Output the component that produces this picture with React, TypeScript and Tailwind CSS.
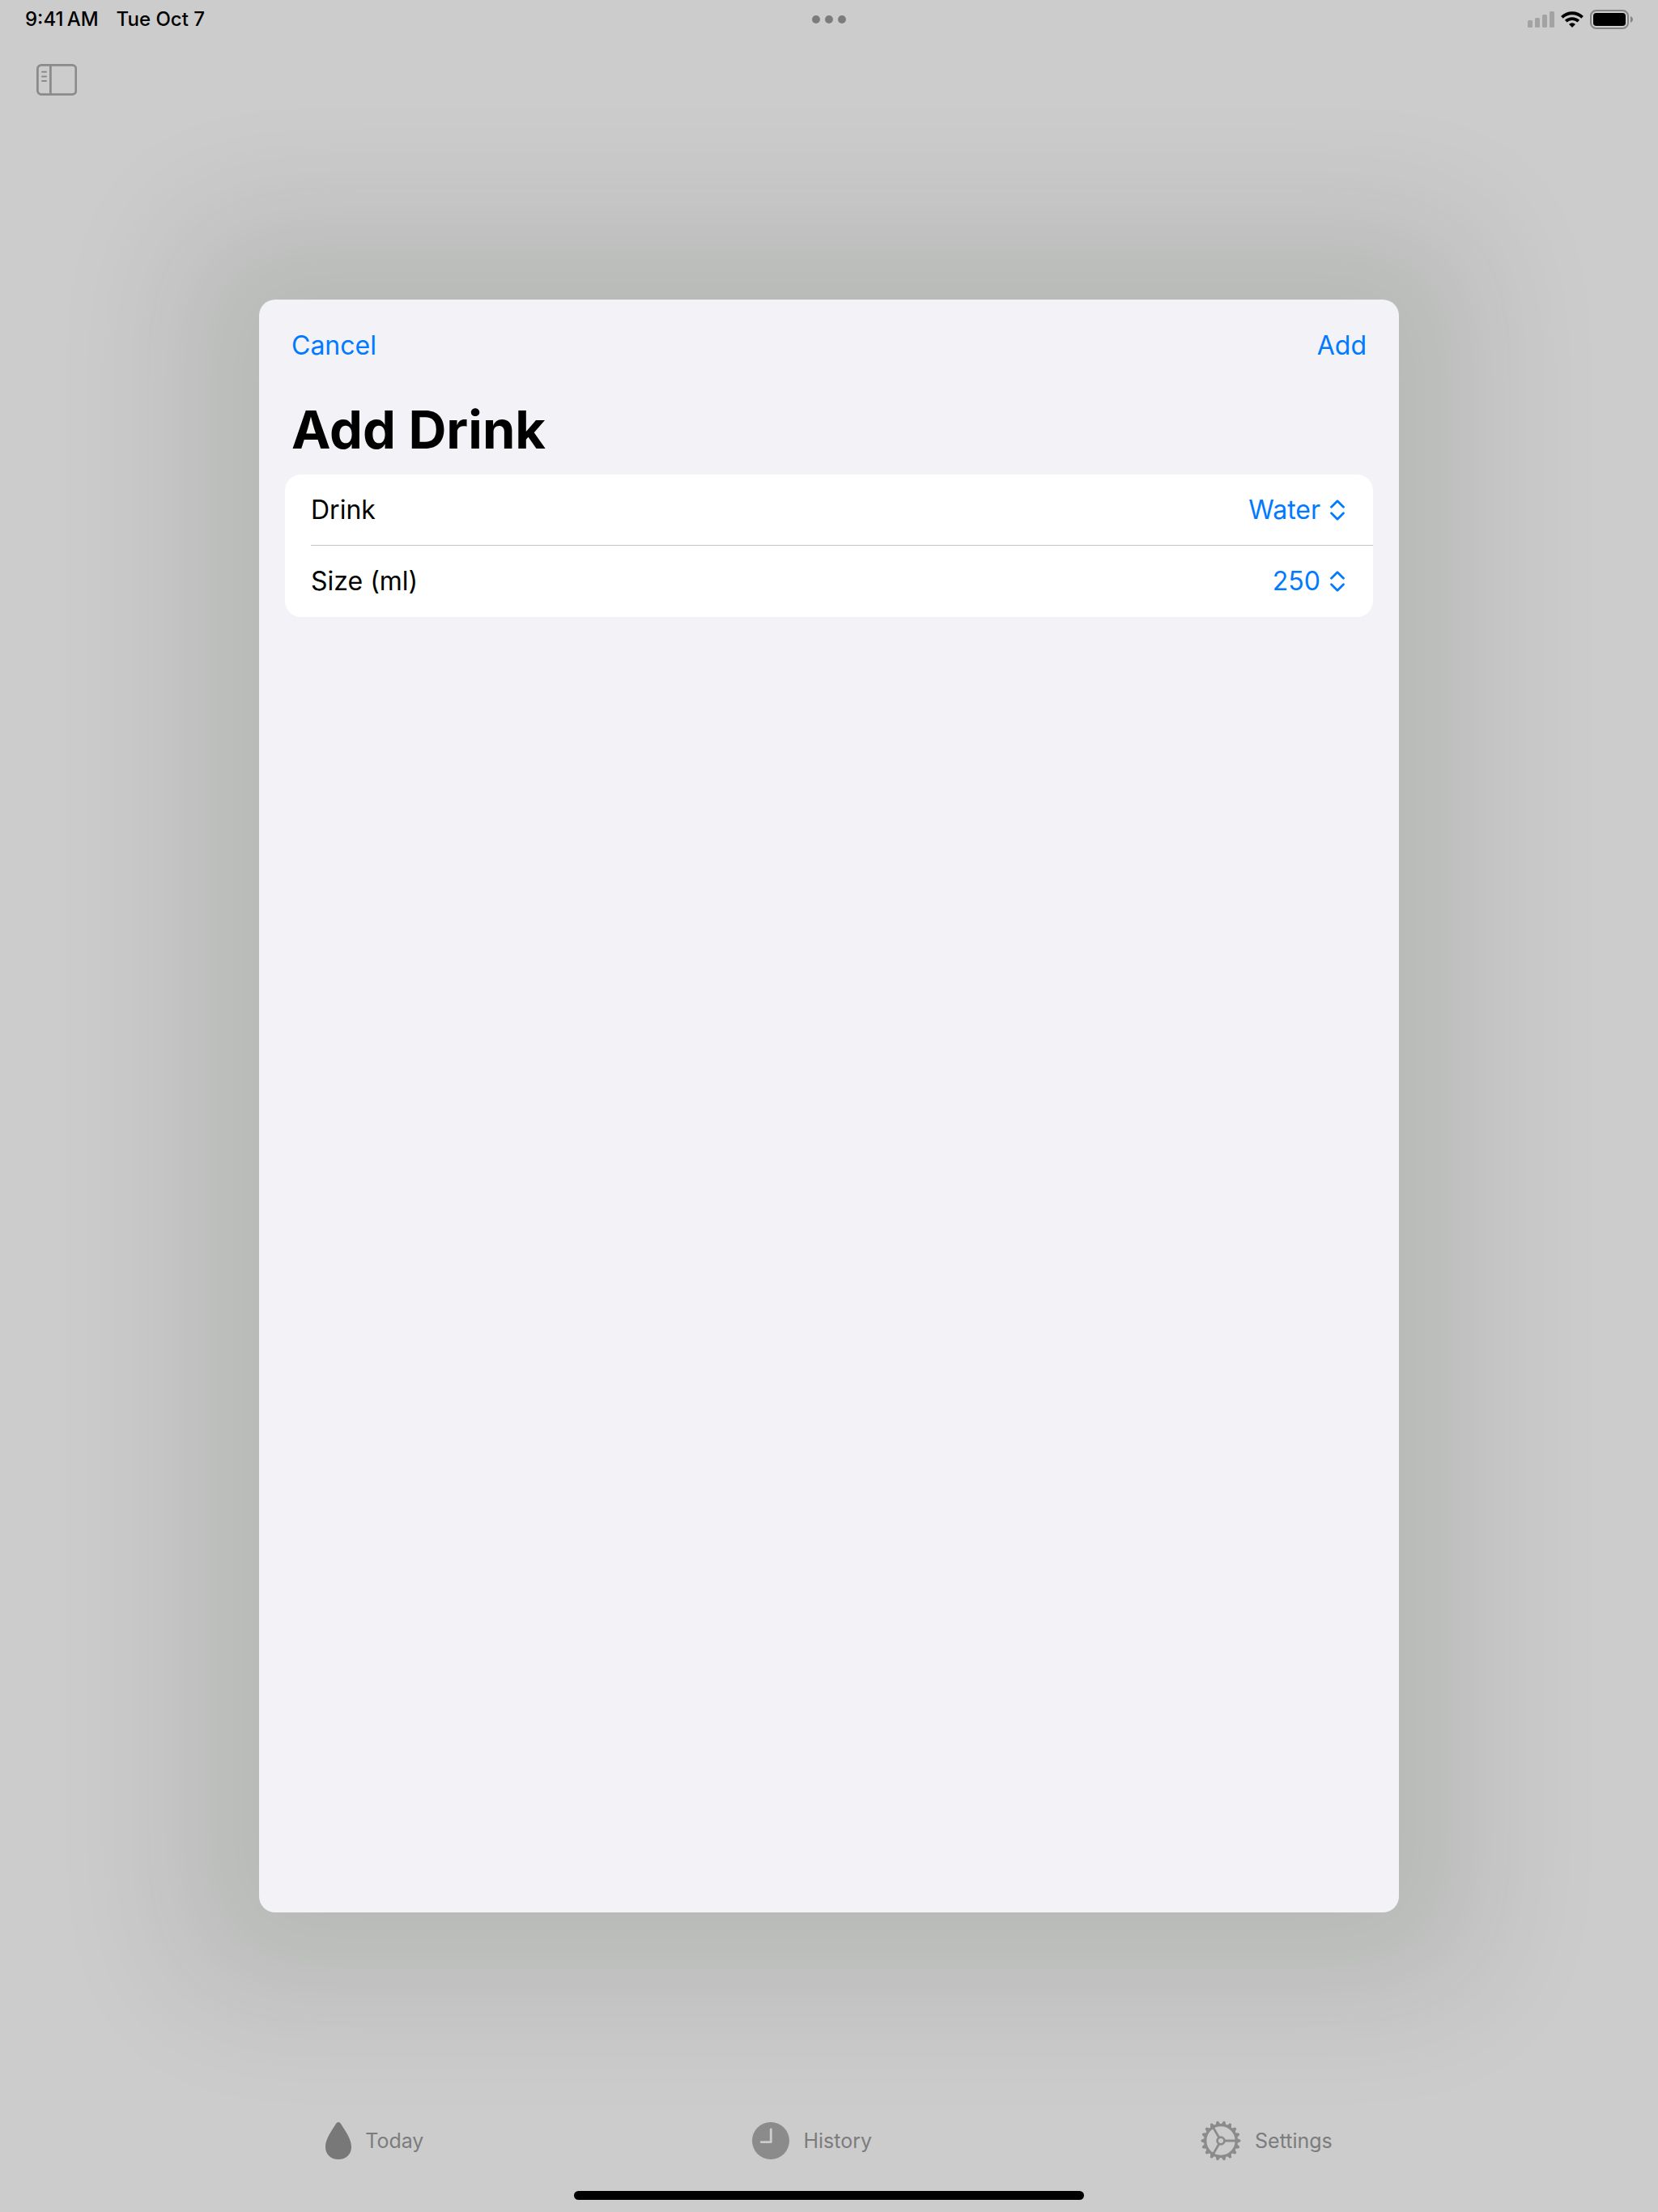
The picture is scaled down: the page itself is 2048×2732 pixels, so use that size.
import type { ReactNode } from "react";

const GEAR_TEETH = Array.from({ length: 18 }, (_, i) => i * 20);

function SidebarIcon() {
  return (
    <svg width="50" height="39" viewBox="0 0 50 39" fill="none" stroke="#8b8b8b" aria-hidden="true">
      <rect x="1.4" y="1.4" width="47.4" height="36.2" rx="4.6" strokeWidth="2.8" />
      <path d="M17.4 1.4V37.6" strokeWidth="2.8" />
      <path d="M7 9.8h5M7 15.4h5M7 21h5" strokeWidth="2" strokeLinecap="round" />
    </svg>
  );
}

function SignalIcon() {
  return (
    <svg width="33" height="20" viewBox="0 0 33 20" fill="#a3a3a3" aria-hidden="true">
      <rect x="0" y="11" width="6" height="9" rx="1.6" />
      <rect x="9" y="8" width="6" height="12" rx="1.6" />
      <rect x="18" y="4" width="6" height="16" rx="1.6" />
      <rect x="27" y="0" width="6" height="20" rx="1.6" />
    </svg>
  );
}

function WifiIcon() {
  return (
    <svg width="28" height="20" viewBox="0 0 28 20" aria-hidden="true">
      <g fill="none" stroke="#000" strokeWidth="3.8">
        <path d="M1.4 7.4a18 18 0 0 1 25.2 0" />
        <path d="M6.2 12.2a11.2 11.2 0 0 1 15.6 0" />
      </g>
      <path d="M14 20l-4-4.1a5.8 5.8 0 0 1 8 0z" />
    </svg>
  );
}

function BatteryIcon() {
  return (
    <svg width="53" height="24" viewBox="0 0 53 24" aria-hidden="true">
      <rect x="1" y="1" width="46" height="22" rx="6.6" fill="none" stroke="#858585" strokeWidth="2" />
      <rect x="4" y="4" width="40" height="16" rx="3.8" />
      <path d="M50 8c1.900.8 3 2.300 3 4s-1.100 3.200-3 4z" fill="#858585" />
    </svg>
  );
}

function ChevronsIcon() {
  return (
    <svg
      width="18"
      height="26"
      viewBox="0 0 18 26"
      fill="none"
      stroke="#007aff"
      strokeWidth="2.7"
      strokeLinecap="round"
      strokeLinejoin="round"
      aria-hidden="true"
    >
      <path d="M1.500 9.300L9 1.800l7.500 7.500M1.500 16.700L9 24.200l7.500-7.500" />
    </svg>
  );
}

function DropIcon() {
  return (
    <svg width="32" height="46" viewBox="0 0 32 46" fill="#787878" aria-hidden="true">
      <path d="M16 0c1.300 0 2.200.7 3 2 1.500 2.500 3.700 5.700 6 9.500C29 18 32 24.500 32 30.500 32 40 25.500 46 16 46S0 40 0 30.500c0-6 3-12.500 7-19C9.300 7.700 11.500 4.500 13 2c.8-1.300 1.700-2 3-2z" />
    </svg>
  );
}

function ClockIcon() {
  return (
    <svg width="46" height="46" viewBox="0 0 46 46" aria-hidden="true">
      <circle cx="23" cy="23" r="23" fill="#8b8b8b" />
      <path
        d="M23.300 9v15.600H11.300"
        fill="none"
        stroke="#ccc"
        strokeWidth="2.9"
        strokeLinecap="round"
        strokeLinejoin="round"
      />
    </svg>
  );
}

function GearIcon() {
  return (
    <svg width="50" height="50" viewBox="-25 -25 50 50" aria-hidden="true">
      <g fill="none" stroke="#8b8b8b">
        <circle r="19.300" strokeWidth="3.300" />
        <circle r="4.400" strokeWidth="2.700" />
        <path d="M5 0H19M-2.500 4.330L-9.500 16.450M-2.500-4.330L-9.500-16.450" strokeWidth="2.800" />
      </g>
      {GEAR_TEETH.map((angle) => (
        <path key={angle} d="M20-3.100L24-1.300Q25 0 24 1.300L20 3.100z" fill="#8b8b8b" transform={`rotate(${angle})`} />
      ))}
    </svg>
  );
}

function Tab({ icon, label }: { icon: ReactNode; label: string }) {
  return (
    <button type="button" className="flex items-center gap-[17px] text-[25px] leading-8 text-[#7c7c7c]">
      {icon}
      {label}
    </button>
  );
}

function PickerRow({ id, label, options }: { id: string; label: string; options: string[] }) {
  return (
    <div className="flex h-[88px] items-center pr-[35px] text-[32px] leading-10">
      <label htmlFor={id} className="flex-1 text-black">
        {label}
      </label>
      <select
        id={id}
        defaultValue={options[0]}
        className="mr-3 appearance-none bg-transparent text-right text-[#007aff] [field-sizing:content]"
      >
        {options.map((option) => (
          <option key={option}>{option}</option>
        ))}
      </select>
      <ChevronsIcon />
    </div>
  );
}

export default function App() {
  return (
    <div className="relative flex min-h-screen flex-col bg-[#cccccc] font-['Inter',sans-serif]">
      <header>
        <div className="grid h-12 grid-cols-3 items-center px-[31px] text-2xl font-medium text-black">
          <div className="flex gap-[22px]">
            <span>9:41{"\u2009"}AM</span>
            <span>Tue Oct 7</span>
          </div>
          <div className="flex justify-center gap-1.5">
            <span className="size-2.5 rounded-full bg-[#7c7c7c]" />
            <span className="size-2.5 rounded-full bg-[#7c7c7c]" />
            <span className="size-2.5 rounded-full bg-[#7c7c7c]" />
          </div>
          <div className="flex items-center justify-end gap-2">
            <SignalIcon />
            <WifiIcon />
            <BatteryIcon />
          </div>
        </div>
        <div className="flex h-[100px] items-center px-[45px]">
          <button type="button" aria-label="Show sidebar">
            <SidebarIcon />
          </button>
        </div>
      </header>

      <div className="flex-1" />

      <nav className="relative z-10 flex justify-center gap-[406px] pb-[37px]">
        <Tab icon={<DropIcon />} label="Today" />
        <Tab icon={<ClockIcon />} label="History" />
        <Tab icon={<GearIcon />} label="Settings" />
      </nav>
      <div className="relative z-10 mx-auto mb-[15px] h-[11px] w-[630px] rounded-full bg-black" />

      <div className="absolute inset-0 flex items-center justify-center overflow-hidden">
        <section
          role="dialog"
          aria-labelledby="dialog-title"
          className="h-[72.9%] w-11/16 rounded-[20px] bg-[#f2f2f7] px-8 shadow-[0_0_160px_100px_rgba(0,25,0,0.1)]"
        >
          <div className="flex h-[114px] items-center justify-between px-2 text-[32px] leading-10 text-[#007aff]">
            <button type="button">Cancel</button>
            <button type="button">Add</button>
          </div>
          <h1 id="dialog-title" className="h-[102px] px-2 text-[65px] leading-[94px] font-bold text-black">
            Add Drink
          </h1>
          <div className="divide-y divide-[#c6c6c8] rounded-[20px] bg-white pl-8">
            <PickerRow id="drink" label="Drink" options={["Water", "Coffee", "Tea"]} />
            <PickerRow id="size" label="Size (ml)" options={["250", "330", "500"]} />
          </div>
        </section>
      </div>
    </div>
  );
}
